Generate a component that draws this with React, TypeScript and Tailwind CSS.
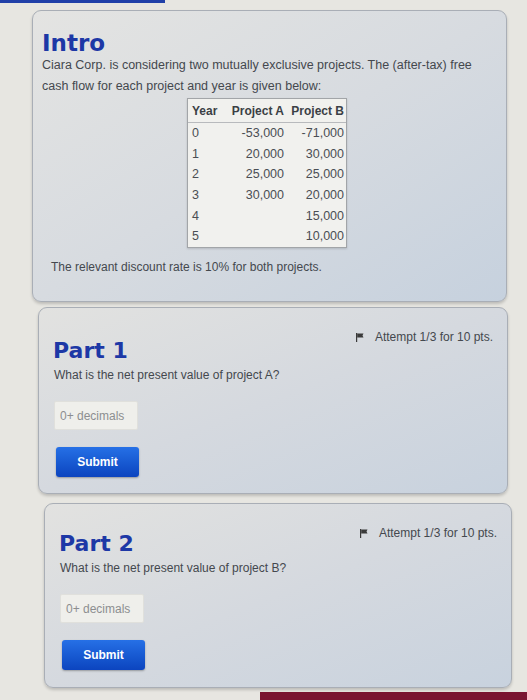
export default function App() {
  const rows = [
    ["0", "-53,000", "-71,000"],
    ["1", "20,000", "30,000"],
    ["2", "25,000", "25,000"],
    ["3", "30,000", "20,000"],
    ["4", "", "15,000"],
    ["5", "", "10,000"],
  ];

  return (
    <div className="relative h-[700px] w-[527px] overflow-hidden bg-[#e7e6e1] font-['Liberation_Sans',Arial,sans-serif] text-[#3f4349]">
      {/* top blue strip */}
      <div className="h-[3px] w-[165px] bg-[#2140a8]" />

      {/* Intro card */}
      <div className="ml-[32px] mt-[7px] h-[292px] w-[475px] rounded-[9px] border border-[#a9aeb6] bg-gradient-to-br from-[#e4e4e2] via-[#d7dbe0] to-[#c6d1de] px-[9px] pt-[18px] shadow-[0_2px_3px_rgba(0,0,0,0.18)]">
        <h1 className="font-['DejaVu_Sans',Verdana,sans-serif] text-[23px] leading-[28px] font-bold text-[#1d38a6]">Intro</h1>
        <p className="-mt-[2px] text-[12.5px] leading-[21px] text-[#44484e]">
          Ciara Corp. is considering two mutually exclusive projects. The (after-tax) free
          <br />
          cash flow for each project and year is given below:
        </p>

        <div className="ml-[145px] mt-[1px] w-[160px] border border-[#a2a5a8] bg-[#f1f1ee] shadow-[0_1px_2px_rgba(0,0,0,0.15)]">
          <div className="flex h-[24px] items-center border-b border-[#b8babd] text-[12px] font-bold text-[#3b3f45]">
            <span className="w-[36px] pl-[4px]">Year</span>
            <span className="w-[60px] text-right">Project A</span>
            <span className="w-[60px] text-right">Project B</span>
          </div>
          {rows.map((r) => (
            <div key={r[0]} className="flex h-[20.7px] items-center text-[12.5px] text-[#4a4e54]">
              <span className="w-[36px] pl-[4px]">{r[0]}</span>
              <span className="w-[60px] text-right">{r[1]}</span>
              <span className="w-[60px] text-right">{r[2]}</span>
            </div>
          ))}
        </div>

        <p className="ml-[9px] mt-[10px] text-[12px] text-[#44484e]">The relevant discount rate is 10% for both projects.</p>
      </div>

      <PartCard
        className="ml-[38px] mt-[5px] h-[187px] w-[470px] pt-[29px]"
        title="Part 1"
        question="What is the net present value of project A?"
      />
      <PartCard
        className="ml-[44px] mt-[9px] h-[185px] w-[468px] pt-[26px]"
        title="Part 2"
        question="What is the net present value of project B?"
      />

      {/* bottom maroon strip */}
      <div className="ml-[260px] mt-[4px] h-[10px] w-[267px] bg-[#7a1431]" />
    </div>
  );
}

function PartCard({ className, title, question }: { className: string; title: string; question: string }) {
  return (
    <div
      className={`${className} relative rounded-[9px] border border-[#a9aeb6] bg-gradient-to-br from-[#e2e2e0] via-[#d5d9df] to-[#c8d2de] px-[15px] shadow-[0_2px_3px_rgba(0,0,0,0.18)]`}
    >
      {/* attempt info */}
      <div className="absolute right-[14px] top-[20px] flex items-center gap-[8px] text-[12px] text-[#44484e]">
        <svg width="10" height="10" viewBox="0 0 10 10" className="mr-[2px]">
          <rect x="1" y="1" width="1.2" height="9" fill="#3a3a3a" />
          <path d="M2.2 1.5 L8.5 1.5 L7.5 3.5 L8.5 5.5 L2.2 5.5 Z" fill="#3a3a3a" />
        </svg>
        <span>Attempt 1/3 for 10 pts.</span>
      </div>

      <h2 className="-ml-[1px] font-['DejaVu_Sans',Verdana,sans-serif] text-[22px] leading-[28px] font-bold text-[#1d38a6]">{title}</h2>
      <p className="mt-[2px] text-[12px] leading-[16px] text-[#44484e]">{question}</p>

      <div className="mt-[18px] flex h-[29px] w-[84px] items-center rounded-[2px] border border-[#e0e0dc] bg-[#efefeb] pl-[5px] text-[12px] text-[#8c8e90]">
        0+ decimals
      </div>

      <button className="mt-[17px] ml-[2px] h-[30px] w-[83px] rounded-[3px] bg-gradient-to-b from-[#2670e6] to-[#0c44bf] text-[12px] font-bold text-white shadow-[0_1px_2px_rgba(0,0,0,0.3)]">
        Submit
      </button>
    </div>
  );
}
